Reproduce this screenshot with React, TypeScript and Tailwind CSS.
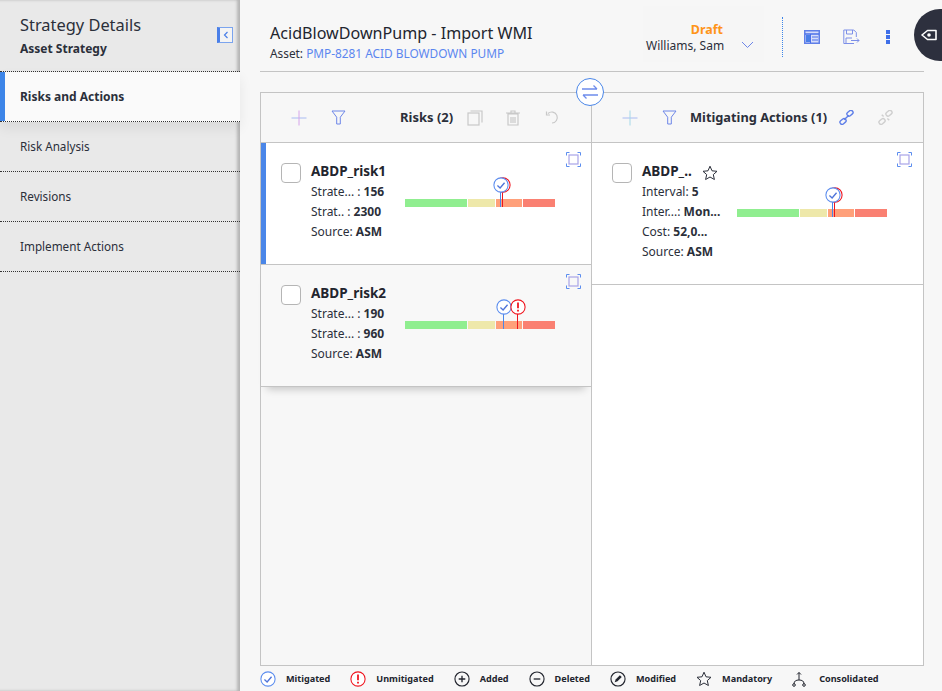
import { FC, ReactNode } from 'react';

const blue = '#4a86e8';

const Mitigated: FC<{ size?: number }> = ({ size = 18 }) => (
  <svg className="shrink-0" width={size} height={size} viewBox="0 0 18 18" fill="none">
    <circle cx="9" cy="9" r="8" fill="#fff" stroke="#5b8def" strokeWidth="1.2" />
    <path d="M5 9.5l3 2.8 5-5.8" stroke="#4f74d9" strokeWidth="1.5" />
  </svg>
);

const Unmitigated: FC<{ size?: number }> = ({ size = 18 }) => (
  <svg className="shrink-0" width={size} height={size} viewBox="0 0 18 18" fill="none">
    <circle cx="9" cy="9" r="8" fill="#fff" stroke="#f0141e" strokeWidth="1.2" />
    <path d="M9 4v6.5" stroke="#f0141e" strokeWidth="2" />
    <path d="M9 12v2" stroke="#f0141e" strokeWidth="2" />
  </svg>
);

const Star: FC<{ size?: number }> = ({ size = 16 }) => (
  <svg className="shrink-0" width={size} height={size} viewBox="0 0 16 16" fill="none">
    <path d="M8 1.2l2 4.6 5 .5-3.7 3.3 1.1 4.9L8 12l-4.4 2.5 1.1-4.9L1 6.3l5-.5z" stroke="#2b2f3a" strokeWidth="1" strokeLinejoin="round" />
  </svg>
);

const Focus = () => (
  <svg width="15" height="15" viewBox="0 0 15 15" fill="none">
    <path d="M.5 3.5V.5h3M11.5 .5h3v3M14.5 11.5v3h-3M3.5 14.5h-3v-3" stroke="#5b8def" strokeWidth="1" />
    <rect x="3" y="3" width="9" height="9" stroke="#a9a4e8" strokeWidth="1.2" />
  </svg>
);

const Plus: FC<{ color: string }> = ({ color }) => (
  <svg width="16" height="16" viewBox="0 0 16 16" fill="none">
    <path d="M0.5 8h15" stroke="#a9bbf2" />
    <path d="M8 .5v15" stroke={color} />
  </svg>
);

const Funnel = () => (
  <svg width="15" height="15" viewBox="0 0 15 15" fill="none">
    <path d="M1 1h13L9.3 7.2V14H5.7V7.2z" stroke="#6d86e8" strokeWidth="1" />
  </svg>
);

const Link: FC<{ color: string; broken?: boolean }> = ({ color, broken }) => (
  <svg width="15" height="15" viewBox="0 0 16 16" fill="none" stroke={color} strokeWidth="1.5">
    <rect x="8.2" y="1.2" width="7" height="4.4" rx="2" transform="rotate(-40 11.7 3.4)" />
    <rect x="0.8" y="10" width="7" height="4.4" rx="2" transform="rotate(-40 4.3 12.2)" />
    {broken ? <path d="M4 5l2 2M10 9l2 2" /> : <path d="M5.5 10.5l5-5" />}
  </svg>
);

const Row: FC<{ label: string; value: string }> = ({ label, value }) => (
  <div className="h-5 leading-5 whitespace-nowrap">
    {label} <b className="font-bold">{value}</b>
  </div>
);

// risk matrix bar, marker positions are relative to the bar
const RiskBar: FC<{ children: ReactNode }> = ({ children }) => (
  <div className="relative flex w-[150px] h-2 gap-px">
    <div className="w-[62px] bg-[#90ee90]" />
    <div className="w-[28px] bg-[#eee8aa]" />
    <div className="w-[26px] bg-[#ffa07a]" />
    <div className="w-[32px] bg-[#fa8072]" />
    {children}
  </div>
);

const Marker: FC<{ left: number; color: string; icon: ReactNode }> = ({ left, color, icon }) => (
  <>
    <div className="absolute top-[-8px] w-px h-4" style={{ left, backgroundColor: color }} />
    <div className="absolute top-[-22px]" style={{ left: left - 7.5 }}>{icon}</div>
  </>
);

const Overlapped = () => (
  <>
    <Marker left={97} color="#f0141e" icon={<Unmitigated size={16} />} />
    <Marker left={95} color={blue} icon={<Mitigated size={16} />} />
  </>
);

const RiskCard: FC<{ title: string; rows: [string, string][]; active?: boolean; children: ReactNode }> = ({ title, rows, active, children }) => (
  <div className={`relative flex h-[122px] border-b border-[#c4c4c4] pl-5 pt-5 ${active ? 'bg-white' : 'bg-[#f8f8f8] shadow-[0_8px_8px_-6px_rgba(0,0,0,0.22)]'}`}>
    {active && <div className="absolute left-0 top-0 bottom-0 w-[5px] bg-[#4a86e8]" />}
    <div className="w-5 h-5 rounded-[4px] border border-[#b5b5b5] bg-white" />
    <div className="ml-2.5 w-[94px] -mt-[2px]">
      <div className="h-5 leading-5 text-[13.5px] font-bold text-[#22252e]">{title}</div>
      <div className="mt-px">
        {rows.map(([l, v]) => <Row key={l + v} label={l} value={v} />)}
      </div>
    </div>
    <div className="mt-[36px]">{children}</div>
    <div className="absolute right-[10px] top-[9px]"><Focus /></div>
  </div>
);

const LegendItem: FC<{ icon: ReactNode; label: string; gap?: string }> = ({ icon, label, gap = 'gap-2.5' }) => (
  <div className={`flex items-center ${gap}`}>
    {icon}
    <span className="text-[9.1px] font-bold text-[#22252e] whitespace-nowrap">{label}</span>
  </div>
);

const NavItem: FC<{ label: string; active?: boolean }> = ({ label, active }) => (
  <div className={`relative h-[50px] flex items-center pl-5 border-b border-dotted border-[#333] ${active ? 'bg-[#fafafa] font-bold text-[12px] shadow-[0_6px_12px_rgba(0,0,0,0.07)]' : 'text-[11.7px]'}`}>
    {active && <div className="absolute left-0 top-0 bottom-0 w-[5px] bg-[#3d85e8]" />}
    {label}
  </div>
);

const Circle: FC<{ children: ReactNode }> = ({ children }) => (
  <svg className="shrink-0" width="16" height="16" viewBox="0 0 17 17" fill="none">
    <circle cx="8.5" cy="8.5" r="7.5" stroke="#22252e" strokeWidth="1.2" />
    {children}
  </svg>
);

const App: FC = () => {
  return (
    <div className="flex w-[942px] h-[691px] overflow-hidden bg-[#f7f7f7] text-[#2b2f3a] font-['Noto_Sans',sans-serif]">
      <aside className="relative z-10 w-[240px] shrink-0 bg-[#e9e9e9] shadow-[inset_-3px_0_3px_rgba(0,0,0,0.22)]">
        <div className="relative h-[72px] border-b border-dotted border-[#333] pl-5 pt-[13px]">
          <div className="text-[16.4px] leading-6">Strategy Details</div>
          <div className="text-[12px] leading-[23px] font-bold">Asset Strategy</div>
          <div className="absolute left-[217px] top-[27px] w-4 h-4 flex items-center justify-center border border-[#7ba4ee] border-l-[3px] border-l-[#4a7fe8] bg-[#f4f4f4]">
            <svg width="6" height="8" viewBox="0 0 6 8" fill="none"><path d="M4.5 1L1.5 4l3 3" stroke="#4a7fe8" strokeWidth="1.2" /></svg>
          </div>
        </div>
        <NavItem label="Risks and Actions" active />
        <NavItem label="Risk Analysis" />
        <NavItem label="Revisions" />
        <NavItem label="Implement Actions" />
      </aside>

      <main className="relative flex-1 flex flex-col pl-5 pr-[18px]">
        <header className="h-[72px] shrink-0 flex border-b border-[#c4c4c4] pl-2.5">
          <div className="flex-1 pt-[21px] whitespace-nowrap">
            <div className="text-[16.1px] leading-6 text-[#22252e]">AcidBlowDownPump - Import WMI</div>
            <div className="text-[11.85px] leading-4">
              Asset: <span className="text-[#5b86ef]">PMP-8281 ACID BLOWDOWN PUMP</span>
            </div>
          </div>
          <div className="flex items-start h-[56px] mt-[6px] w-[121px] pl-[3px] pt-[16px] shrink-0 bg-[#f6f6f6]">
            <div className="text-right w-[77px] whitespace-nowrap">
              <div className="text-[12.5px] leading-[16px] font-bold text-[#ff9419]">Draft</div>
              <div className="text-[12px] leading-4">Williams, Sam</div>
            </div>
            <svg className="ml-[18px] mt-[19px]" width="13" height="8" viewBox="0 0 13 8" fill="none"><path d="M1 1l5.5 5.5L12 1" stroke="#6d86e8" /></svg>
          </div>
          <div className="flex items-center h-10 mt-[17px] ml-[18px] mr-[34px] border-l border-dotted border-[#3d85e8] pl-[21px] gap-[23px]">
            <svg width="16" height="16" viewBox="0 0 16 16" fill="none">
              <rect x=".75" y="1.75" width="14.5" height="12.5" fill="#d6dcfa" stroke="#5f7fe8" strokeWidth="1.5" />
              <path d="M1 5h14" stroke="#4a70e8" strokeWidth="1.5" />
              <path d="M6.5 5v9M8 8h6M8 11h6" stroke="#4a70e8" />
              <rect x="2" y="6" width="4" height="7" fill="#4a7fe8" />
            </svg>
            <svg width="17" height="16" viewBox="0 0 17 16" fill="none">
              <path d="M11 14.5H.8V1h10l2.5 2.5V8" stroke="#7c8fe8" />
              <path d="M3.5 1v4h6V1M3 14.5V9h6" stroke="#7c8fe8" />
              <path d="M8 11.5h8M14 9.5l2 2-2 2" stroke="#7c8fe8" />
            </svg>
            <div className="flex flex-col gap-px w-1 ml-[3px]">
              <div className="h-1 bg-[#3f6fe8]" />
              <div className="h-1 bg-[#3f6fe8]" />
              <div className="h-1 bg-[#3f6fe8]" />
            </div>
          </div>
        </header>

        <section className="relative mt-5 flex h-[574px] border border-[#c4c4c4] bg-[#f8f8f8]">
          <div className="w-[331px] shrink-0 border-r border-[#c4c4c4] bg-[#f7f7f7] text-[12px]">
            <div className="flex items-center h-[50px] border-b border-[#c4c4c4] pl-[30px]">
              <Plus color="#d6a4ea" />
              <div className="ml-[24px] flex"><Funnel /></div>
              <div className="ml-[54px] text-[13px] font-bold whitespace-nowrap">Risks (2)</div>
              <svg className="ml-[14px]" width="16" height="16" viewBox="0 0 16 16" fill="none" stroke="#c8c8c8" strokeWidth="1.2">
                <rect x="1" y="3" width="11" height="12" />
                <path d="M3.5 1H15v11.5" />
              </svg>
              <svg className="ml-[23px]" width="14" height="16" viewBox="0 0 14 16" fill="none" stroke="#c8c8c8" strokeWidth="1.2">
                <path d="M2 4h10v11H2zM0 3h14M5 3V1h4v2M5 7v6M7 7v6M9 7v6" />
              </svg>
              <svg className="ml-[25px]" width="15" height="15" viewBox="0 0 15 15" fill="none" stroke="#c8c8c8" strokeWidth="1.2">
                <path d="M3 3.5A5.5 5.5 0 1 1 7 13" />
                <path d="M1.5 1.5v3.5H5" />
              </svg>
            </div>
            <RiskCard
              active
              title="ABDP_risk1"
              rows={[['Strate... :', '156'], ['Strat.. :', '2300'], ['Source:', 'ASM']]}
            >
              <RiskBar><Overlapped /></RiskBar>
            </RiskCard>
            <RiskCard
              title="ABDP_risk2"
              rows={[['Strate... :', '190'], ['Strate... :', '960'], ['Source:', 'ASM']]}
            >
              <RiskBar>
                <Marker left={98} color={blue} icon={<Mitigated size={16} />} />
                <Marker left={112} color="#f0141e" icon={<Unmitigated size={16} />} />
              </RiskBar>
            </RiskCard>
          </div>

          <div className="flex-1 min-w-0 bg-white text-[12px]">
            <div className="flex items-center h-[50px] border-b border-[#c4c4c4] bg-[#f7f7f7] pl-[30px]">
              <Plus color="#a5d8e8" />
              <div className="ml-[24px] flex"><Funnel /></div>
              <div className="ml-[13px] text-[12.8px] font-bold whitespace-nowrap">Mitigating Actions (1)</div>
              <div className="ml-[12px] flex"><Link color="#5f7fe8" /></div>
              <div className="ml-[24px] flex"><Link color="#cfcfcf" broken /></div>
            </div>
            <div className="relative flex h-[142px] border-b border-[#c4c4c4] pl-5 pt-5">
              <div className="w-5 h-5 rounded-[4px] border border-[#b5b5b5]" />
              <div className="ml-2.5 w-[95px] -mt-[2px]">
                <div className="flex items-center h-5 leading-5 text-[13.5px] font-bold text-[#22252e]">
                  <span className="w-[50px] whitespace-nowrap">ABDP_..</span>
                  <span className="ml-[10px] mt-[3px] flex"><Star /></span>
                </div>
                <div className="mt-px">
                  <Row label="Interval:" value="5" />
                  <Row label="Inter...:" value="Mon..." />
                  <Row label="Cost:" value="52,0..." />
                  <Row label="Source:" value="ASM" />
                </div>
              </div>
              <div className="mt-[46px]">
                <RiskBar><Overlapped /></RiskBar>
              </div>
              <div className="absolute right-[11px] top-[9px]"><Focus /></div>
            </div>
          </div>

          <div className="absolute left-[315px] top-[-15px] w-7 h-7 rounded-full border border-[#4a86e8] bg-white flex items-center justify-center">
            <svg width="18" height="16" viewBox="0 0 18 16" fill="none" stroke="#6d8cec" strokeWidth="1.3">
              <path d="M1 5h15M12.5 1.5L16 5" />
              <path d="M17 11H2M5.5 14.5L2 11" />
            </svg>
          </div>
        </section>

        <footer className="flex items-center gap-5 h-[25px]">
          <LegendItem label="Mitigated" icon={<Mitigated size={16} />} />
          <LegendItem label="Unmitigated" icon={<Unmitigated size={16} />} />
          <LegendItem label="Added" icon={<Circle><path d="M5 8.5h7M8.5 5v7" stroke="#22252e" strokeWidth="1.4" /></Circle>} />
          <LegendItem label="Deleted" icon={<Circle><path d="M5 8.5h7" stroke="#22252e" strokeWidth="1.4" /></Circle>} />
          <LegendItem label="Modified" icon={<Circle><path d="M5 12l1-3 4.5-4.5 2 2L8 11z" fill="#22252e" /></Circle>} />
          <LegendItem label="Mandatory" icon={<Star />} />
          <LegendItem gap="gap-[13px]" label="Consolidated" icon={
            <svg className="shrink-0" width="14" height="16" viewBox="0 0 14 16" fill="none" stroke="#22252e">
              <path d="M7 9V1.5M5 3.5l2-2 2 2" />
              <path d="M2 13c0-3 2-4 5-4s5 1 5 4" />
              <circle cx="2" cy="14" r="1.3" />
              <circle cx="12" cy="14" r="1.3" />
            </svg>
          } />
        </footer>

        <div className="absolute left-[674px] top-[9px] w-[52px] h-[52px] rounded-full bg-[#2d303e] flex items-center pl-[7px]">
          <svg width="16" height="12" viewBox="0 0 16 12" fill="none">
            <path d="M1 6l5.5-4.5H15v9H6.5z" stroke="#fff" strokeWidth="1.6" strokeLinejoin="round" />
            <circle cx="8" cy="6" r="1.8" fill="#fff" />
          </svg>
        </div>
      </main>
    </div>
  );
};

export default App;
